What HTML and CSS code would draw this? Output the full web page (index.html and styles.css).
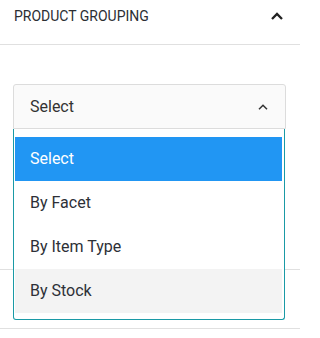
FILE: index.html
```html
<!DOCTYPE html>
<html>
<head>
<meta charset="utf-8">
<link rel="stylesheet" href="styles.css">
</head>
<body>
<div class="panel">
  <div class="section-head">
    <span class="section-title">Product Grouping</span>
    <svg class="head-chevron" width="12" height="8" viewBox="0 0 12 8"><path d="M1 7 L6 2 L11 7" fill="none" stroke="#222" stroke-width="2.3"/></svg>
  </div>
  <div class="section-body">
    <div class="select-wrap">
      <div class="select-box">
        <span class="select-value">Select</span>
        <svg class="select-chevron" width="10" height="6" viewBox="0 0 10 6"><path d="M1 5.2 L5 1.2 L9 5.2" fill="none" stroke="#333" stroke-width="1.5"/></svg>
      </div>
      <ul class="dropdown">
        <li class="option selected">Select</li>
        <li class="option">By Facet</li>
        <li class="option">By Item Type</li>
        <li class="option hover">By Stock</li>
      </ul>
    </div>
  </div>
  <div class="section-next"></div>
</div>
</body>
</html>
```
FILE: styles.css
```css
* { box-sizing: border-box; }
html, body { margin: 0; padding: 0; background: #fff; }
body {
  font-family: Roboto, "Liberation Sans", sans-serif;
  color: #2d3037;
  width: 300px;
  height: 338px;
  overflow: hidden;
}
.section-head {
  height: 45px;
  border-bottom: 1px solid #e0e0e0;
  padding: 8px 17px 0 14px;
  display: flex;
  justify-content: space-between;
  align-items: flex-start;
}
.section-title {
  font-size: 14px;
  line-height: 16px;
  font-weight: 400;
  text-transform: uppercase;
  color: #2b2e33;
}
.head-chevron { margin-top: 4px; }
.section-body {
  height: 225px;
  border-bottom: 1px solid #e0e0e0;
  padding: 39px 14px 0 13px;
}
.section-next {
  height: 59px;
  border-bottom: 1px solid #e0e0e0;
}
.select-wrap { position: relative; }
.select-box {
  height: 45px;
  background: #fafafa;
  border: 1px solid #dcdcdc;
  border-radius: 3px 3px 0 0;
  display: flex;
  align-items: center;
  justify-content: space-between;
  padding: 0 17px 0 16px;
}
.select-value {
  font-size: 16px;
  color: #333;
  margin-top: 0px;
}
.select-chevron { margin-top: 1px; }
.dropdown {
  position: absolute;
  left: 0;
  top: 45px;
  width: 272px;
  margin: 0;
  padding: 8px 2px 6px 1px;
  list-style: none;
  background: #fff;
  border: 1px solid #1a9aa6;
  border-top: none;
  border-radius: 0 0 3px 3px;
}
.option {
  height: 44px;
  line-height: 44px;
  padding-left: 15px;
  font-size: 16px;
  color: #2d3037;
}
.option.selected { background: #2196f3; color: #fff; }
.option.hover { background: #f3f3f3; }
```
